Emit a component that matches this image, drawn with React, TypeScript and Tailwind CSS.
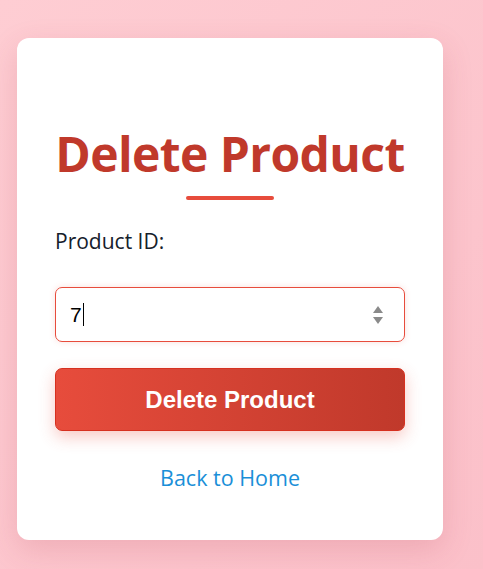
import React from 'react';

const App: React.FC = () => {
  return (
    <div className="min-h-[569px] w-full bg-gradient-to-br from-[#fecdd3] to-[#fbc0c9] px-[17px] pt-[38px] pb-[28px]" style={{ fontFamily: '"Open Sans", "Noto Sans", sans-serif' }}>
      <div className="w-[426px] rounded-[12px] bg-white px-[38px] pt-[88px] pb-[46px] shadow-[0_10px_30px_rgba(180,60,80,0.18)]">
        {/* Heading */}
        <div className="flex flex-col items-center">
          <h1 className="whitespace-nowrap text-[48px] font-bold leading-[56px] tracking-[-0.6px] text-[#c0392b]">Delete Product</h1>
          <div className="mt-[14px] h-[4px] w-[88px] rounded-full bg-[#e74c3c]" />
        </div>

        {/* Form */}
        <form className="mt-[28px]" onSubmit={(e) => e.preventDefault()}>
          <label className="block text-[21px] font-medium leading-[26px] text-[#15202b]">Product ID:</label>
          <div className="mt-[33px] flex h-[55px] items-center rounded-[7px] border border-[#e74c3c] px-[14px] shadow-[0_0_6px_rgba(231,76,60,0.18)]">
            <span className="text-[21px] text-black" style={{ fontFamily: '"Liberation Sans", Arial, sans-serif' }}>7</span>
            <span className="ml-[1px] h-[23px] w-[1px] bg-black" />
            <div className="flex-1" />
            <svg width="12" height="22" viewBox="0 0 12 22" className="mr-[6px]">
              <path d="M6 2 L11 9 L1 9 Z" fill="#8a8a8a" />
              <path d="M1 13 L11 13 L6 20 Z" fill="#8a8a8a" />
            </svg>
          </div>
          <button
            type="submit"
            className="mt-[26px] h-[63px] w-full rounded-[7px] border border-[#d6301f] bg-gradient-to-r from-[#e74c3c] to-[#c0392b] text-[24px] font-bold text-white shadow-[0_6px_16px_rgba(231,76,60,0.3)]"
            style={{ fontFamily: '"Liberation Sans", Arial, sans-serif' }}
          >
            Delete Product
          </button>
        </form>

        <div className="mt-[31px] text-center">
          <a href="#" className="text-[21.5px] text-[#1a8fd8]">Back to Home</a>
        </div>
      </div>
    </div>
  );
};

export default App;
